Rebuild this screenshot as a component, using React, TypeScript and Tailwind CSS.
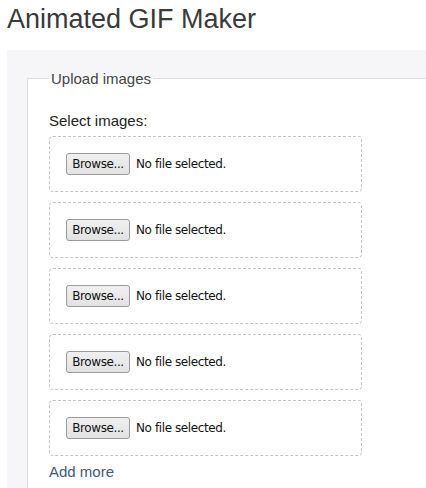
import React from "react";

const rows = [0, 1, 2, 3, 4];

function FileRow() {
  return (
    <div className="flex h-[56px] w-[313px] items-center rounded-[4px] border border-dashed border-[#c4c4c4] bg-white px-4">
      <button
        type="button"
        className="h-[22px] w-[64px] rounded-[3px] border border-[#9a9a9a] bg-gradient-to-b from-[#f0f0f0] to-[#e2e2e2] text-[12px] leading-none tracking-[-0.4px] text-[#111]"
        style={{ fontFamily: '"DejaVu Sans", sans-serif' }}
      >
        Browse...
      </button>
      <span
        className="ml-[6px] text-[12px] tracking-[-0.4px] text-[#111]"
        style={{ fontFamily: '"DejaVu Sans", sans-serif' }}
      >
        No file selected.
      </span>
    </div>
  );
}

export default function App() {
  return (
    <div
      className="h-[488px] overflow-hidden bg-white pl-[7px] text-[#222]"
      style={{ fontFamily: '"Liberation Sans", Arial, sans-serif' }}
    >
      <h1 className="pt-[4px] text-[27px] leading-[31px] text-[#3a3a3a]">
        Animated GIF Maker
      </h1>
      <div className="mt-[15px] w-[460px] bg-[#f6f6f8] pl-[20px] pt-[20px] pb-10">
        <fieldset className="min-h-[500px] border border-[#dcdcdc] bg-white pl-[21px] pr-4">
          <legend className="px-[2px] text-[15px] leading-[17px] text-[#444]">
            Upload images
          </legend>
          <div className="mt-[25px] text-[15px] leading-[17px]">Select images:</div>
          <div className="mt-[7px] flex flex-col gap-[10px]">
            {rows.map((r) => (
              <FileRow key={r} />
            ))}
          </div>
          <a href="#" className="mt-[7px] block text-[15px] leading-[17px] text-[#3d5a85]">
            Add more
          </a>
        </fieldset>
      </div>
    </div>
  );
}
